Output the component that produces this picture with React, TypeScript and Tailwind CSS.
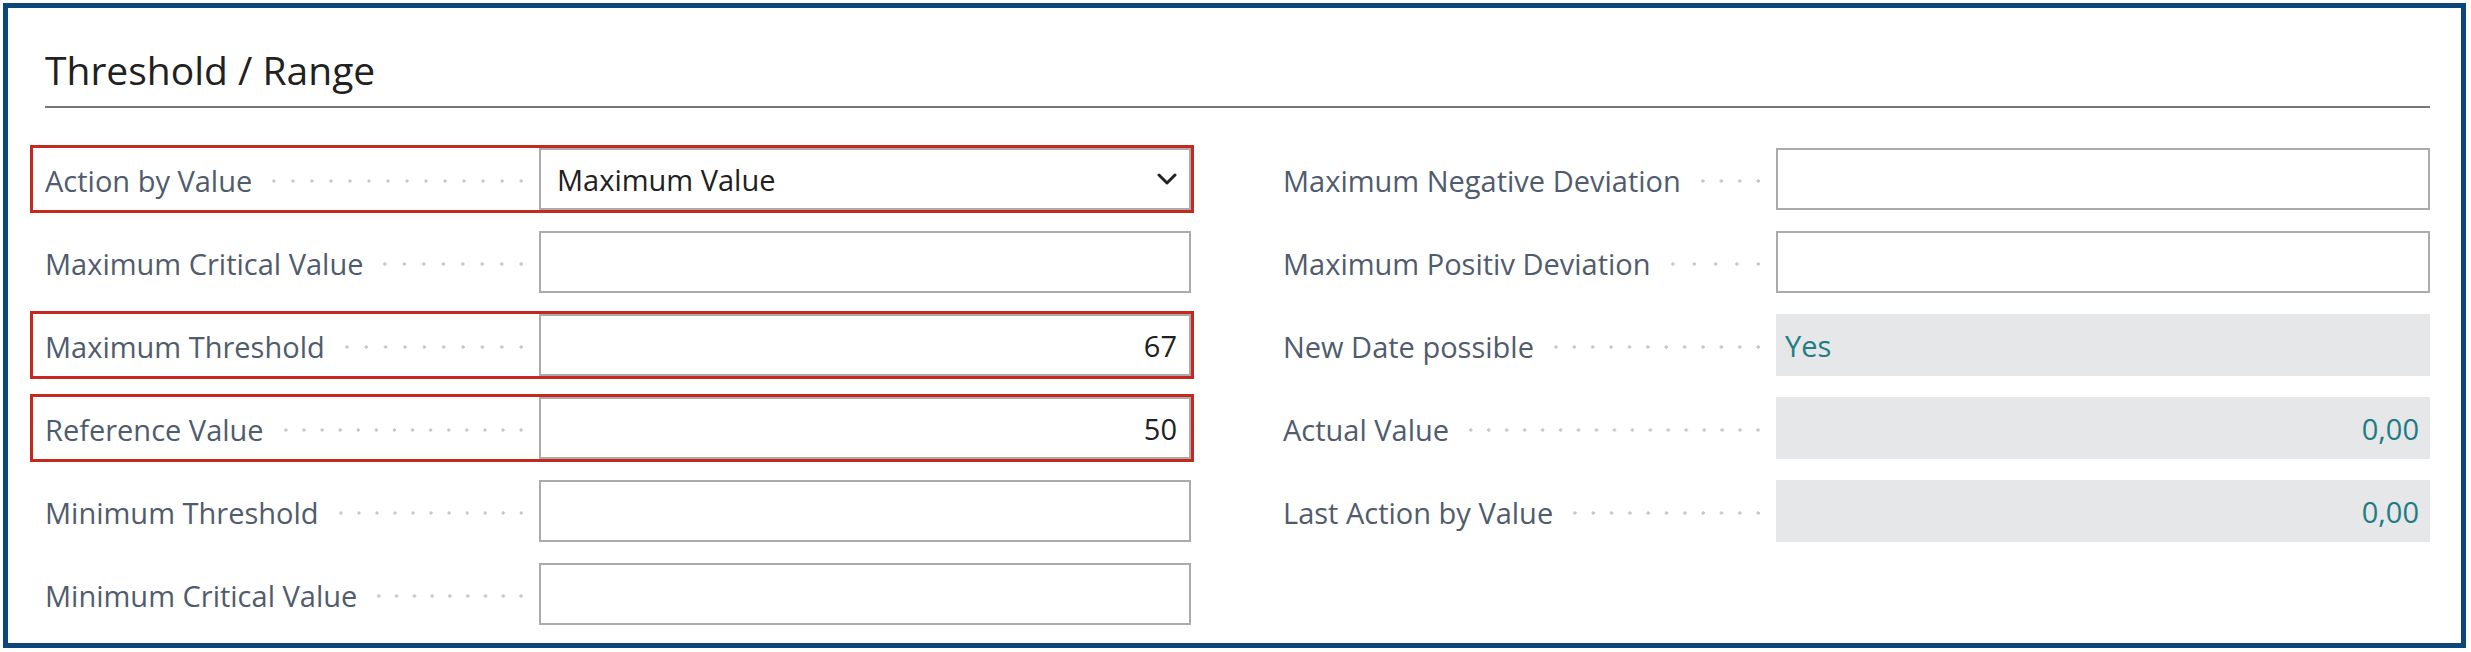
import React from "react";

type Field = {
  label: string;
  value?: string;
  kind: "select" | "input" | "readonly";
  align?: "left" | "right";
  marked?: boolean;
};

const LEFT: Field[] = [
  { label: "Action by Value", value: "Maximum Value", kind: "select", marked: true },
  { label: "Maximum Critical Value", kind: "input" },
  { label: "Maximum Threshold", value: "67", kind: "input", align: "right", marked: true },
  { label: "Reference Value", value: "50", kind: "input", align: "right", marked: true },
  { label: "Minimum Threshold", kind: "input" },
  { label: "Minimum Critical Value", kind: "input" },
];

const RIGHT: Field[] = [
  { label: "Maximum Negative Deviation", kind: "input" },
  { label: "Maximum Positiv Deviation", kind: "input" },
  { label: "New Date possible", value: "Yes", kind: "readonly" },
  { label: "Actual Value", value: "0,00", kind: "readonly", align: "right" },
  { label: "Last Action by Value", value: "0,00", kind: "readonly", align: "right" },
];

function Chevron() {
  return (
    <svg width="20" height="12" viewBox="0 0 20 12" fill="none" className="-mt-[3px]">
      <path d="M2 2 L10 10 L18 2" stroke="#222" strokeWidth="3" strokeLinecap="round" strokeLinejoin="round" />
    </svg>
  );
}

function Row({ f, labelW, pad }: { f: Field; labelW: string; pad: string }) {
  const box =
    f.kind === "readonly"
      ? "bg-[#e6e7e8]"
      : "bg-white border-2 border-[#ababab]";
  return (
    <div className={`flex h-[62px] ${pad} ${f.marked ? "outline-[3px] outline-[#c5281f]" : ""}`}>
      <div className={`flex items-center pt-[4px] ${labelW} shrink-0`}>
        <span className="text-[#505c6d] whitespace-nowrap">{f.label}</span>
        <span className="flex-1 ml-[13px] mr-[9px] h-[6px] bg-[radial-gradient(circle,#c4c6c9_1.4px,transparent_1.9px)] bg-size-[17.7px_6px] bg-repeat-space" />
      </div>
      <div
        className={`flex-1 flex items-center pt-[2px] ${box} ${
          f.align === "right" ? "justify-end" : "justify-between"
        } ${f.kind === "readonly" ? "pl-[9px] pr-[11px] text-[#1f7c84]" : "pl-[16px] pr-[12px] text-[#212121]"}`}
      >
        <span>{f.value}</span>
        {f.kind === "select" && <Chevron />}
      </div>
    </div>
  );
}

export default function App() {
  return (
    <div className="w-[2471px] h-[652px] bg-white pt-[3px] pl-[3px] pr-[5px] pb-[4px] font-['Open_Sans',sans-serif]">
      <div className="h-full border-[5px] border-[#0c467a] pl-[37px] pr-[31px] pt-[36px]">
        <h2 className="text-[39px] leading-[52px] text-[#212121]">Threshold / Range</h2>
        <div className="mt-[10px] h-[2px] bg-[#77787a]" />
        <div className="mt-[40px] -ml-[12px] grid grid-cols-[1158px_1147px] gap-x-[92px] text-[29px] leading-[40px]">
          <div className="flex flex-col gap-[21px]">
            {LEFT.map((f) => (
              <Row key={f.label} f={f} labelW="w-[494px]" pad="pl-[12px]" />
            ))}
          </div>
          <div className="flex flex-col gap-[21px]">
            {RIGHT.map((f) => (
              <Row key={f.label} f={f} labelW="w-[493px]" pad="" />
            ))}
          </div>
        </div>
      </div>
    </div>
  );
}
